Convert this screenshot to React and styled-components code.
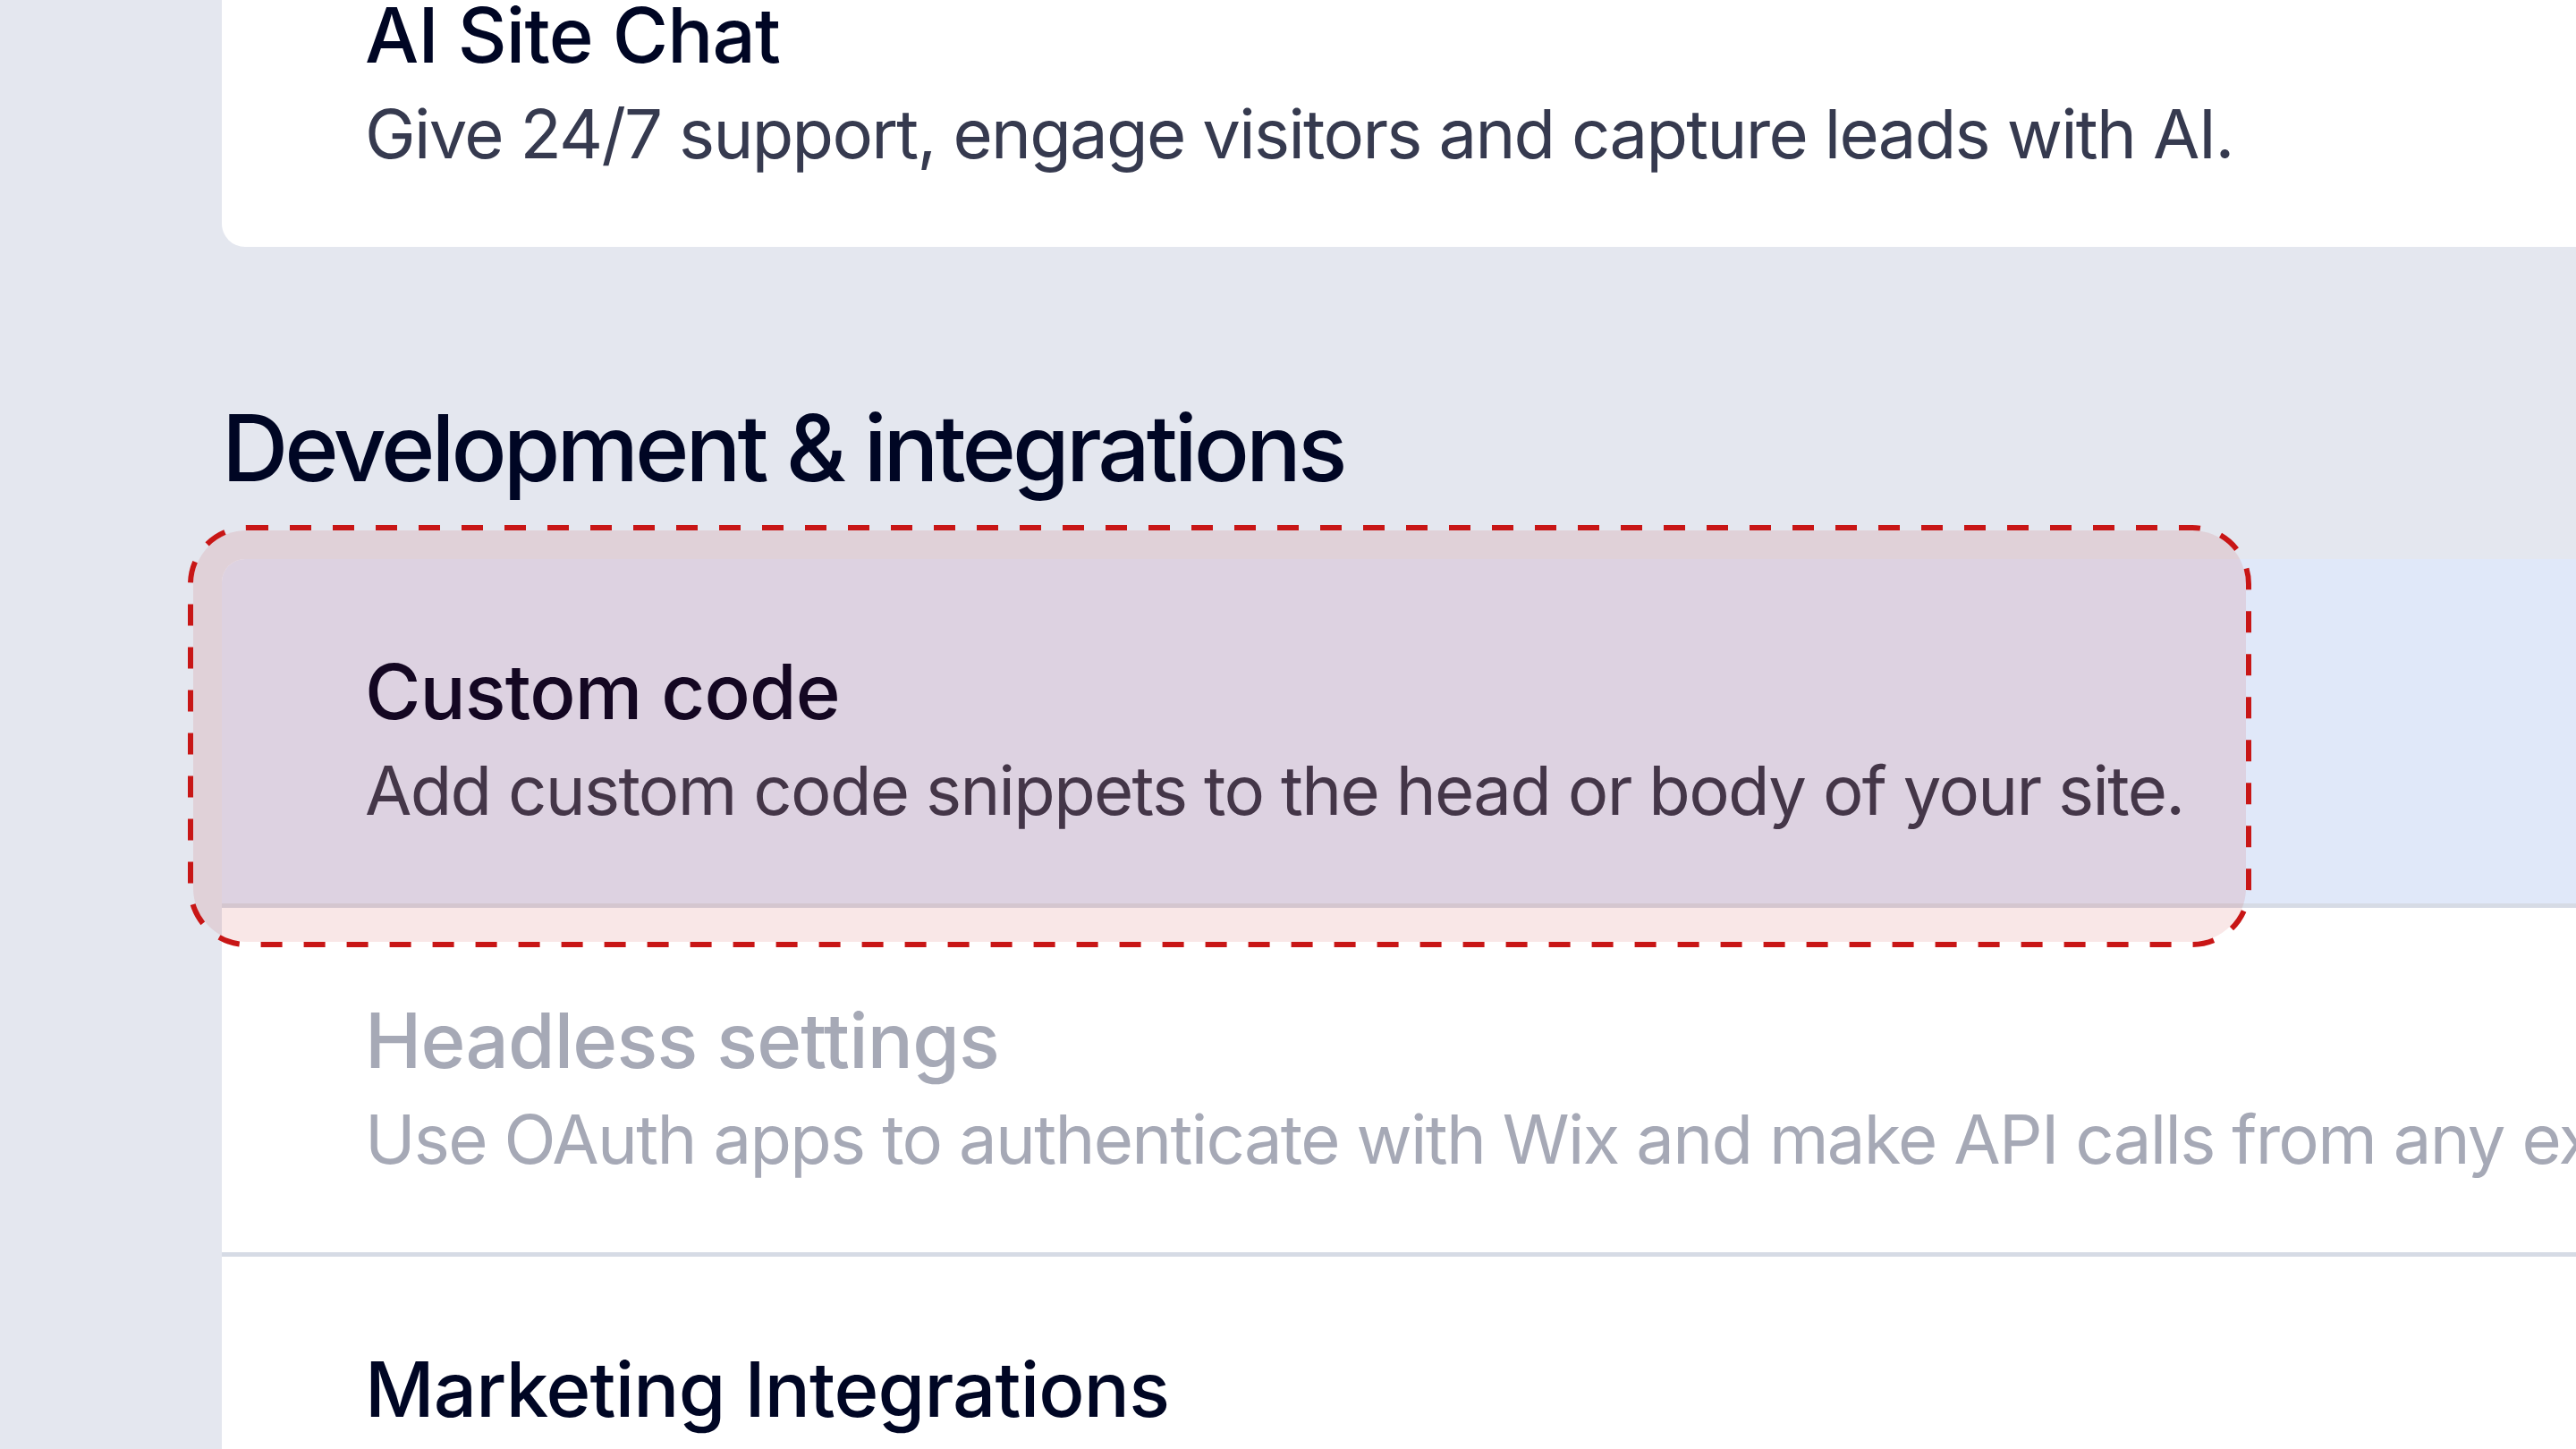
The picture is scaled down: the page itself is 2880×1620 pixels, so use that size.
import React from 'react';
import styled, { createGlobalStyle } from 'styled-components';

const GlobalStyle = createGlobalStyle`
  html, body {
    margin: 0;
    padding: 0;
    background: #e4e7ef;
    overflow: hidden;
  }
  body {
    font-family: Inter, "Noto Sans", "Liberation Sans", sans-serif;
    -webkit-font-smoothing: antialiased;
  }
`;

// the page is scrolled, so the first card only shows its last row
const Page = styled.div`
  margin-top: -109px;
  padding-left: 248px;
  width: 3200px;
`;

const Card = styled.div`
  background: #ffffff;
  border-radius: 26px;
`;

const Row = styled.div`
  position: relative;
  padding: 95px 0 72px 160px;
  background: ${(p) => (p.$selected ? '#e0e8f9' : 'transparent')};

  & + & {
    border-top: 5px solid #d6dbe5;
  }
  &:first-child {
    border-top-left-radius: 26px;
    border-top-right-radius: 26px;
  }
  &:last-child {
    border-bottom-left-radius: 26px;
    border-bottom-right-radius: 26px;
  }
`;

const Title = styled.div`
  font-size: 85px;
  line-height: 108px;
  font-weight: 500;
  letter-spacing: -0.8px;
  color: ${(p) => (p.$muted ? '#a6a9b6' : '#000624')};
  white-space: nowrap;
`;

const Desc = styled.div`
  font-size: 76px;
  line-height: 110px;
  font-weight: 400;
  letter-spacing: -1.7px;
  color: ${(p) => (p.$muted ? '#a6a9b6' : '#363a4f')};
  white-space: nowrap;
`;

const SectionTitle = styled.h2`
  margin: 163px 0 62px;
  font-size: 103px;
  line-height: 124px;
  font-weight: 500;
  letter-spacing: -4px;
  color: #000624;
`;

// dashed annotation box drawn over the selected row
const Highlight = styled.div`
  position: absolute;
  left: -38px;
  top: -38px;
  width: 2307px;
  height: 472px;
  box-sizing: border-box;
  padding: 6px;
  z-index: 2;
  pointer-events: none;
`;

const HighlightFill = styled.div`
  width: 100%;
  height: 100%;
  border-radius: 60px;
  background: rgba(200, 20, 20, 0.1);
`;

const HighlightStroke = styled.svg`
  position: absolute;
  inset: 0;
  overflow: visible;
`;

const Item = ({ title, desc, muted, selected, children }) => (
  <Row $selected={selected}>
    <Title $muted={muted}>{title}</Title>
    <Desc $muted={muted}>{desc}</Desc>
    {children}
  </Row>
);

export default function App() {
  return (
    <>
      <GlobalStyle />
      <Page>
        <Card>
          <Item
            title="AI Site Chat"
            desc="Give 24/7 support, engage visitors and capture leads with AI."
          />
        </Card>

        <SectionTitle>Development &amp; integrations</SectionTitle>

        <Card>
          <Item
            selected
            title="Custom code"
            desc="Add custom code snippets to the head or body of your site."
          >
            <Highlight>
              <HighlightFill />
              <HighlightStroke width="2307" height="472">
                <rect
                  x="3"
                  y="3"
                  width="2301"
                  height="466"
                  rx="63"
                  fill="none"
                  stroke="#c81616"
                  strokeWidth="6"
                  strokeDasharray="24 24"
                />
              </HighlightStroke>
            </Highlight>
          </Item>
          <Item
            muted
            title="Headless settings"
            desc="Use OAuth apps to authenticate with Wix and make API calls from any external site or app."
          />
          <Item
            title="Marketing Integrations"
            desc="Connect your site to marketing tools like Google, Facebook and more."
          />
        </Card>
      </Page>
    </>
  );
}
